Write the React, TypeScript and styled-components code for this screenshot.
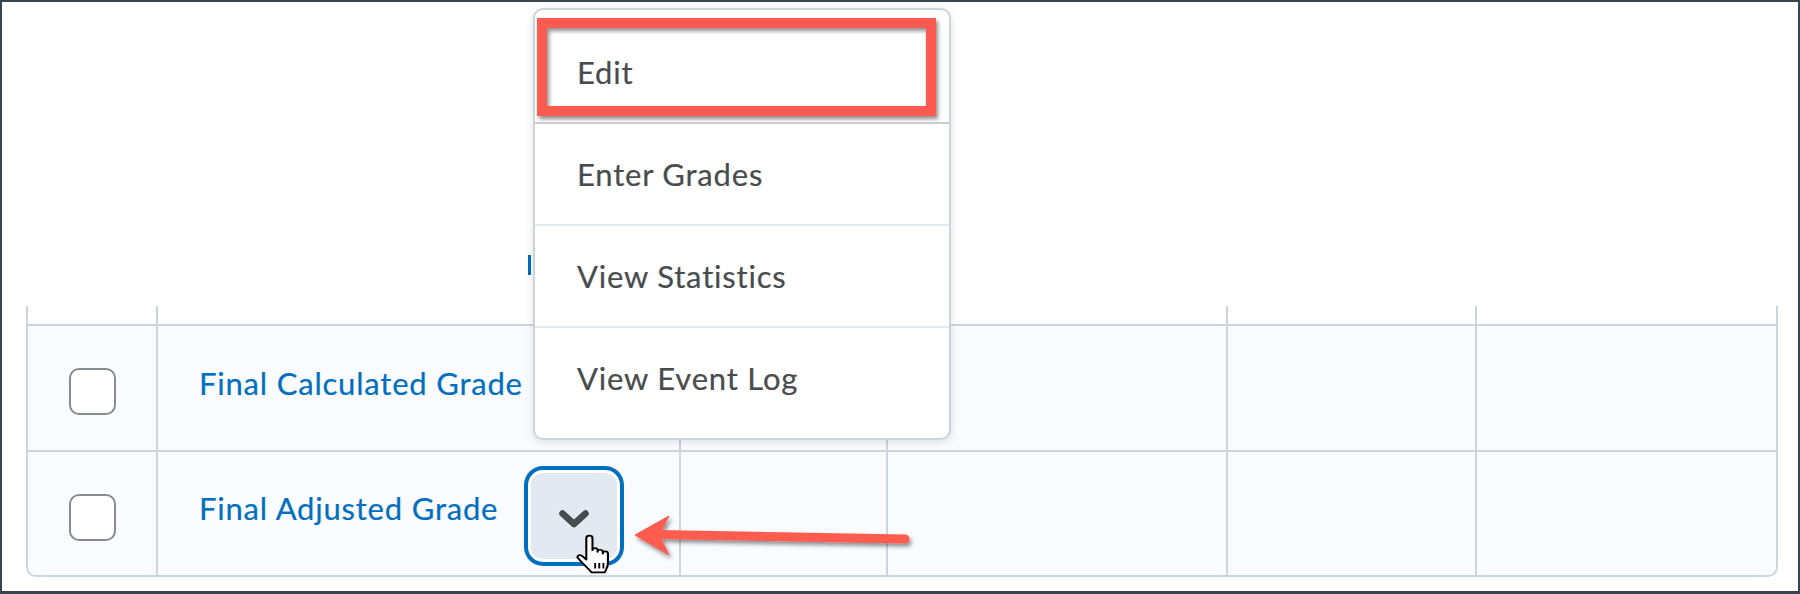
import React from "react";
import styled, { createGlobalStyle } from "styled-components";

const GlobalStyle = createGlobalStyle`
  html, body {
    margin: 0;
    padding: 0;
    background: #ffffff;
  }
  body {
    font-family: Lato, "Noto Sans", sans-serif;
  }
  * {
    box-sizing: border-box;
  }
`;

const LINE = "#cdd5dc";
const LINK = "#006fbf";
const INK = "#494c4e";
const MARK = "#fd5b4f";

const Frame = styled.div`
  position: relative;
  width: 1800px;
  height: 594px;
  border: 2px solid #37454f;
  border-bottom-width: 3px;
  background: #ffffff;
  overflow: hidden;
`;

const Sheet = styled.div`
  margin: 0 20px 0 24px;
`;

/* header content was blanked out in the capture; only a sliver of a link survives */
const HeadBlank = styled.div`
  height: 304px;
  display: flex;
  align-items: flex-end;
  padding: 0 0 31px 502px;
`;

const Sliver = styled.span`
  display: block;
  width: 3px;
  height: 20px;
  background: ${LINK};
`;

const Grid = styled.div`
  display: grid;
  grid-template-columns: 130px 523px 207px 340px 249px 299px;
  border-left: 2px solid ${LINE};
  border-right: 2px solid ${LINE};
  border-bottom: 2px solid ${LINE};
  border-radius: 0 0 10px 10px;
  overflow: hidden;
`;

const HeadCell = styled.div<{ $last?: boolean }>`
  height: 18px;
  border-right: ${(p) => (p.$last ? "none" : `2px solid ${LINE}`)};
`;

const Cell = styled.div<{ $last?: boolean; $h: number }>`
  height: ${(p) => p.$h}px;
  display: flex;
  align-items: center;
  background: #f9fbff;
  border-top: 2px solid ${LINE};
  border-right: ${(p) => (p.$last ? "none" : `2px solid ${LINE}`)};
`;

const CheckCell = styled(Cell)`
  justify-content: center;
`;

const NameCell = styled(Cell)`
  padding-left: 41px;
`;

const Checkbox = styled.span`
  display: block;
  width: 47px;
  height: 47px;
  margin-top: 7px;
  border: 2px solid #878c90;
  border-radius: 10px;
  background: #ffffff;
`;

const NameLink = styled.a`
  font-size: 31px;
  letter-spacing: 0.8px;
  line-height: 37px;
  color: ${LINK};
  text-decoration: none;
  margin-bottom: 10px;
  white-space: nowrap;
  -webkit-text-stroke: 0.2px ${LINK};
`;

const MenuButton = styled.button`
  width: 86px;
  height: 86px;
  margin: 5px 0 0 33px;
  padding: 6px 0 0;
  border: none;
  border-radius: 12px;
  background: #e3e9f1;
  box-shadow: 0 0 0 3px #ffffff, 0 0 0 7px ${LINK};
  display: flex;
  align-items: center;
  justify-content: center;
`;

const Menu = styled.div`
  position: absolute;
  left: 531px;
  top: 6px;
  width: 418px;
  height: 432px;
  padding: 12px 0 10px;
  border: 2px solid ${LINE};
  border-radius: 10px;
  background: #ffffff;
  box-shadow: 0 2px 8px rgba(0, 0, 0, 0.12);
`;

const MenuItem = styled.div<{ $sep?: string }>`
  position: relative;
  height: ${(p) => (p.$sep ? 102 : 100)}px;
  padding-left: 42px;
  display: flex;
  align-items: center;
  font-size: 31px;
  letter-spacing: 0.8px;
  color: ${INK};
  -webkit-text-stroke: 0.2px ${INK};
  border-top: ${(p) => (p.$sep ? `2px solid ${p.$sep}` : "none")};
`;

const Highlight = styled.span`
  position: absolute;
  left: 2px;
  top: -4px;
  width: 399px;
  height: 98px;
  border: 10px solid ${MARK};
  box-shadow: 2px 3px 4px rgba(0, 0, 0, 0.45),
    inset 2px 3px 4px rgba(0, 0, 0, 0.45);
`;

const ArrowSvg = styled.svg`
  position: absolute;
  left: 624px;
  top: 503px;
  overflow: visible;
`;

const CursorSvg = styled.svg`
  position: absolute;
  left: 574px;
  top: 532px;
`;

const Chevron = () => (
  <svg width="32" height="20" viewBox="0 0 32 20">
    <polyline
      points="4.5,4.5 16,15 27.5,4.5"
      fill="none"
      stroke={INK}
      strokeWidth="6.5"
      strokeLinecap="round"
      strokeLinejoin="round"
    />
  </svg>
);

const Arrow = () => (
  <ArrowSvg width="290" height="60" viewBox="0 0 290 60">
    <defs>
      <filter id="drop" x="-10%" y="-40%" width="120%" height="180%">
        <feDropShadow dx="2" dy="3" stdDeviation="2" floodColor="#000" floodOpacity="0.45" />
      </filter>
    </defs>
    <g filter="url(#drop)" fill={MARK} stroke={MARK}>
      <line x1="32" y1="29.5" x2="279" y2="34" strokeWidth="9" strokeLinecap="round" />
      <polygon points="9,30 43,11 33,30 43,50" strokeWidth="1" strokeLinejoin="round" />
    </g>
  </ArrowSvg>
);

const Cursor = () => (
  <CursorSvg width="34" height="40" viewBox="1 0 16.5 23.5" preserveAspectRatio="none">
    <path
      d="M6 2.5 A1.5 1.5 0 0 1 9 2.5 V9.5 A1.25 1.25 0 0 1 11.5 9.5 V10.5 A1.25 1.25 0 0 1 14 10.5 V11.5 A1.25 1.25 0 0 1 16.5 11.5 V17 C16.5 19.5 15.5 21 15 22.5 H8.5 C7.5 21 6 19.5 4.5 17.5 L1.8 14 A1.2 1.2 0 0 1 3.6 12.6 L6 15 Z"
      fill="#ffffff"
      stroke="#000000"
      strokeWidth="1"
      strokeLinejoin="round"
    />
    <path d="M10.3 17 V20.2 M12.3 17 V20.2 M14.3 17 V20.2" stroke="#000000" strokeWidth="0.9" />
  </CursorSvg>
);

const rows = [
  { name: "Final Calculated Grade", h: 126, menu: false },
  { name: "Final Adjusted Grade", h: 125, menu: true },
];

const menuItems = ["Edit", "Enter Grades", "View Statistics", "View Event Log"];

export default function App() {
  return (
    <>
      <GlobalStyle />
      <Frame>
        <Sheet>
          <HeadBlank>
            <Sliver />
          </HeadBlank>
          <Grid>
            {[0, 1, 2, 3, 4, 5].map((i) => (
              <HeadCell key={`h${i}`} $last={i === 5} />
            ))}
            {rows.map((row) => (
              <React.Fragment key={row.name}>
                <CheckCell $h={row.h}>
                  <Checkbox />
                </CheckCell>
                <NameCell $h={row.h}>
                  <NameLink>{row.name}</NameLink>
                  {row.menu && (
                    <MenuButton aria-label="Actions">
                      <Chevron />
                    </MenuButton>
                  )}
                </NameCell>
                <Cell $h={row.h} />
                <Cell $h={row.h} />
                <Cell $h={row.h} />
                <Cell $h={row.h} $last />
              </React.Fragment>
            ))}
          </Grid>
        </Sheet>

        <Menu>
          {menuItems.map((label, i) => (
            <MenuItem key={label} $sep={i === 0 ? undefined : i === 1 ? "#c9cdd1" : "#e3e9f1"}>
              {i === 0 && <Highlight />}
              {label}
            </MenuItem>
          ))}
        </Menu>

        <Arrow />
        <Cursor />
      </Frame>
    </>
  );
}
